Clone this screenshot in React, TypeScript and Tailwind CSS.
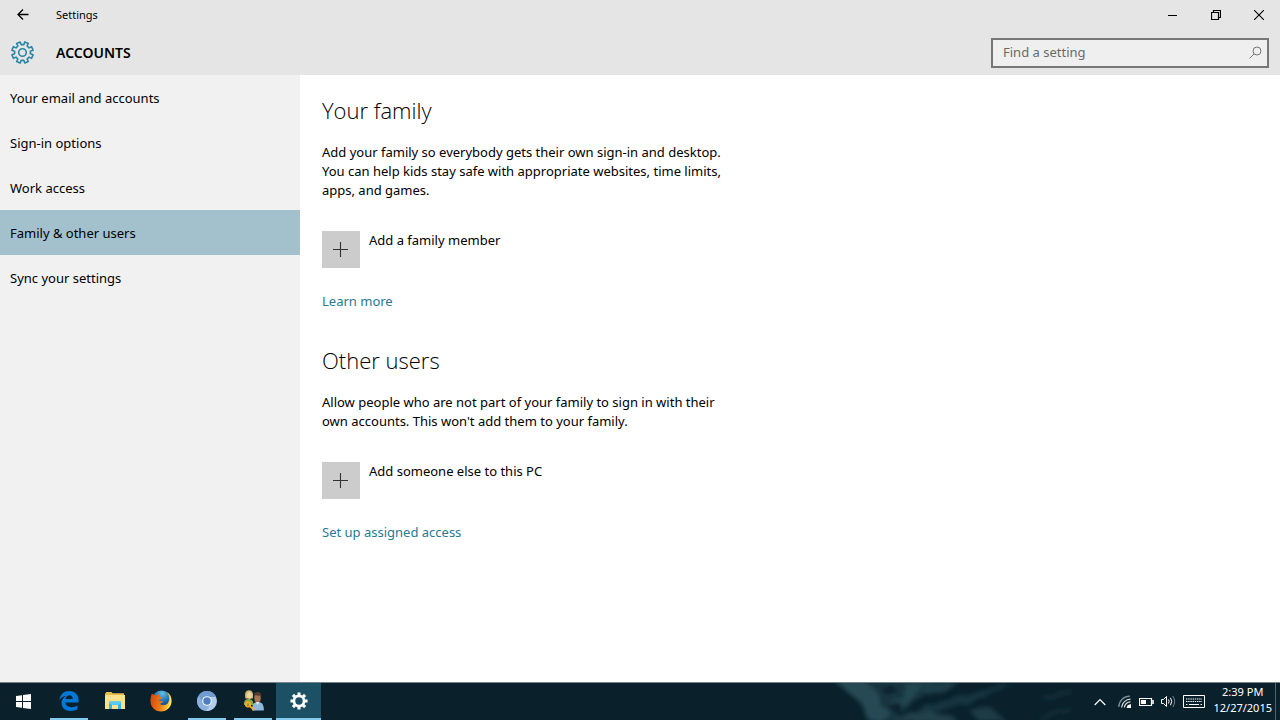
import React from 'react';

function gearPath(cx: number, cy: number, outer: number, root: number, topHalf: number, rootHalf: number): string {
  const points: string[] = [];
  for (let i = 0; i < 8; i++) {
    const mid = i * 45;
    const corners: [number, number][] = [
      [root, mid - rootHalf],
      [outer, mid - topHalf],
      [outer, mid + topHalf],
      [root, mid + rootHalf],
    ];
    for (const [r, deg] of corners) {
      const a = (deg * Math.PI) / 180;
      points.push(`${(cx + r * Math.cos(a)).toFixed(2)} ${(cy + r * Math.sin(a)).toFixed(2)}`);
    }
  }
  return `M${points.join('L')}Z`;
}

const pages = ['Your email and accounts', 'Sign-in options', 'Work access', 'Family & other users', 'Sync your settings'];

function TitleBar() {
  return (
    <div className="flex h-[30px] items-center">
      <button aria-label="Back" className="flex h-full w-[45px] items-center justify-center">
        <svg width="12" height="12" viewBox="0 0 12 12" fill="none" stroke="#000" strokeWidth="1.3">
          <path d="M11.5 5.5H1M6 0.5L1 5.5L6 10.5" />
        </svg>
      </button>
      <span className="ml-[11px] flex-1 text-[11px] leading-[16px]">Settings</span>
      <button aria-label="Minimize" className="flex h-full w-[43px] items-center justify-center">
        <svg width="10" height="10" viewBox="0 0 10 10" stroke="#000">
          <path d="M0 5.5H9" />
        </svg>
      </button>
      <button aria-label="Restore" className="flex h-full w-[43px] items-center justify-center">
        <svg width="10" height="10" viewBox="0 0 10 10" fill="none" stroke="#000">
          <path d="M0.5 2.5H7.5V9.5H0.5ZM2.5 2.5V0.5H9.5V7.5H7.5" strokeWidth="1.2" />
        </svg>
      </button>
      <button aria-label="Close" className="flex h-full w-[43px] items-center justify-center">
        <svg width="10" height="10" viewBox="0 0 10 10" stroke="#000" strokeWidth="1.1">
          <path d="M0 0L10 10M10 0L0 10" />
        </svg>
      </button>
    </div>
  );
}

function Header() {
  return (
    <div className="flex h-[45px] items-center pr-[11px] pl-[11px]">
      <svg width="23" height="23" viewBox="0 0 23 23" fill="none" stroke="#2b86a6" strokeWidth="1.6" strokeLinejoin="round">
        <path d={gearPath(11.5, 11.5, 10.8, 8, 10, 13)} transform="rotate(22.5 11.5 11.5)" />
        <circle cx="11.5" cy="11.5" r="3.8" />
      </svg>
      <h1 className="ml-[22px] flex-1 text-[14px] font-semibold">ACCOUNTS</h1>
      <label className="flex h-[30px] w-[278px] items-center border-2 border-[#777] bg-[#efefef] pr-[5px] pl-[10px]">
        <input
          aria-label="Find a setting"
          placeholder="Find a setting"
          className="min-w-0 flex-1 bg-transparent text-[13px] outline-none placeholder:text-[#6a6a6a]"
        />
        <svg width="13" height="13" viewBox="0 0 13 13" fill="none" stroke="#777" strokeWidth="1">
          <circle cx="8" cy="5" r="4" />
          <path d="M5.1 7.9L0.6 12.4" />
        </svg>
      </label>
    </div>
  );
}

function AddRow({ label }: { label: string }) {
  return (
    <button className="mt-[31px] flex items-start gap-[9px] text-left">
      <span className="flex h-[37px] w-[38px] items-center justify-center bg-[#ccc]">
        <svg width="16" height="16" viewBox="0 0 16 16" stroke="#333" strokeWidth="1.1">
          <path d="M7.5 0V15M0 7.5H15" />
        </svg>
      </span>
      <span>{label}</span>
    </button>
  );
}

function Section({ title, lines, add, link }: { title: string; lines: string[]; add: string; link: string }) {
  return (
    <section>
      <h2 className="font-['Open_Sans','Noto_Sans',sans-serif] text-[22px] leading-[30px] font-light">{title}</h2>
      <p className="mt-[18px]">
        {lines.map((line) => (
          <span key={line} className="block">
            {line}
          </span>
        ))}
      </p>
      <AddRow label={add} />
      <a href="#" className="mt-6 block w-fit text-[#267a94]">
        {link}
      </a>
    </section>
  );
}

function EdgeIcon() {
  return (
    <svg width="20" height="20" viewBox="0 0 20 20" fill="#0078d7">
      <path d="M0.4 9.2C1.2 3.2 5 0 10.3 0C16 0 19.6 4 19.6 9.2V11.6H6.4C6.6 14.8 9.3 16.2 12.4 16.2C14.6 16.2 16.6 15.6 18.4 14.5V18.6C16.4 19.5 14.3 20 11.8 20C6.3 20 2.5 16.8 2.5 12C2.5 9 4.2 6.3 7.2 4.9C4.4 5 1.8 6.5 0.4 9.2ZM6.6 8H13.7C13.7 5.6 12.6 4.3 10.4 4.3C8.4 4.3 7 5.7 6.6 8Z" />
    </svg>
  );
}

function FolderIcon() {
  return (
    <svg width="20" height="18" viewBox="0 0 20 18">
      <path d="M0 1.2H1V0H6.5L7.5 1.2H19V3H20V17H0Z" fill="#e8bb4f" />
      <path d="M1 3H20V17H0V4Z" fill="#fce08b" />
      <path d="M4 17V9.5H16V17H13V13H7V17Z" fill="#2ab7ec" />
      <path d="M4 9.5H16V11L13 13H7L4 11Z" fill="#59cbf3" />
    </svg>
  );
}

function FirefoxIcon() {
  return (
    <svg width="22" height="22" viewBox="0 0 22 22">
      <defs>
        <radialGradient id="globe" cx="0.55" cy="0.15" r="0.8">
          <stop offset="0" stopColor="#5cc3ea" />
          <stop offset="0.6" stopColor="#1b62a8" />
          <stop offset="1" stopColor="#123a78" />
        </radialGradient>
        <linearGradient id="fox" x1="0" y1="0" x2="1" y2="0.2">
          <stop offset="0" stopColor="#d2420f" />
          <stop offset="0.6" stopColor="#ef7d16" />
          <stop offset="1" stopColor="#fdd63c" />
        </linearGradient>
      </defs>
      <circle cx="11.5" cy="10" r="9.5" fill="url(#globe)" />
      <path
        d="M1.9 3.5C2.7 4.1 3.3 4.6 4 5C5 4.6 6.2 4.8 7.2 5.4C7.9 4.4 8.6 3.9 9.6 3.5C9.2 4.8 9.3 5.9 10 6.7L12.2 7.4C12 8.6 10.6 9 9.6 9.8L9 11.3C10.6 10.8 12.4 11 13.6 12C12 12 11.5 13.6 9.6 13.8C11.7 15.6 15.6 15.6 17.6 13.4C18.9 11.8 19.5 9.6 19.2 7.5C18.9 5.4 18 3.6 16.6 2.1C19.9 3.7 21.7 7 21.6 11C21.5 17.2 16.9 21.5 11 21.5C5 21.5 0.5 17 0.5 11C0.5 8 1 5.6 1.9 3.5Z"
        fill="url(#fox)"
      />
      <path d="M19.2 5C20.8 7 21.5 9.5 21.1 12.5C20.5 16 18.5 18.6 15.7 20C18.3 17.3 19.8 14.5 19.8 10.5C20 8.2 19.8 6.5 19.2 5Z" fill="#fde465" />
    </svg>
  );
}

function ChromiumIcon() {
  return (
    <svg width="20" height="20" viewBox="0 0 20 20">
      <circle cx="10" cy="10" r="10" fill="#7ba4d6" />
      <path d="M1.3 5A10 10 0 0 1 18.7 5L19 6H10A4.4 4.4 0 0 0 5.6 9.5Z" fill="#6f9bd0" />
      <path d="M1.3 5A10 10 0 0 0 9.2 20L13.5 13L10 14.2A4.3 4.3 0 0 1 6 11.8Z" fill="#8bb0dc" />
      <path d="M18.8 6A10 10 0 0 1 9.2 20L13.8 12.2A4.5 4.5 0 0 0 12.6 6Z" fill="#b1cdec" />
      <circle cx="10" cy="10" r="4.8" fill="#f4f8fc" />
      <circle cx="10" cy="10" r="3.7" fill="#4f7dbd" />
    </svg>
  );
}

function UsersIcon() {
  return (
    <svg width="21" height="21" viewBox="0 0 21 21">
      <path d="M1 15C0.7 11.5 2 9 5.5 9C9 9 10.5 11 10.5 15Z" fill="#88a554" />
      <path d="M2.4 8.5C1.2 3 3 0.3 6 0.3C9.2 0.3 10.8 3 9.8 8.5Z" fill="#cdbf72" />
      <ellipse cx="6.4" cy="5.5" rx="2.4" ry="3.3" fill="#f0d2aa" />
      <path d="M9.3 20.5C8.8 14.5 10.5 12 14.8 12C19 12 21 14.5 20.8 20.5Z" fill="#90b8db" />
      <ellipse cx="14.5" cy="7.8" rx="3.3" ry="4.8" fill="#a87450" />
      <path d="M10.8 7C10.6 3.5 12.2 2 14.6 2C17.5 2 18.7 4 18.2 8L16.6 5.7L12.2 5.3Z" fill="#563c2c" />
      <path d="M13 12.3L14.5 15L16.3 12.3Z" fill="#eef4fa" />
      <circle cx="5" cy="14.3" r="2.2" fill="none" stroke="#f2ad22" strokeWidth="1.9" />
      <path d="M6.5 15.8L11.3 20.3M9 18.6L10.8 17" stroke="#f2ad22" strokeWidth="1.8" />
    </svg>
  );
}

function WindowsIcon() {
  return (
    <svg width="15" height="15" viewBox="0 0 15 15" fill="#fff">
      <path d="M0 2.1L6 1.2V7H0ZM7 1.1L15 0V7H7ZM0 8H6V13.8L0 12.9ZM7 8H15V15L7 13.9Z" />
    </svg>
  );
}

function TaskGearIcon() {
  return (
    <svg width="18" height="18" viewBox="0 0 18 18">
      <path
        d={gearPath(9, 9, 8.7, 6.4, 10, 14) + 'M12.7 9A3.7 3.7 0 1 0 5.3 9A3.7 3.7 0 1 0 12.7 9Z'}
        fill="#fff"
        fillRule="evenodd"
      />
    </svg>
  );
}

const apps = [
  { name: 'Microsoft Edge', icon: <EdgeIcon />, open: true },
  { name: 'File Explorer', icon: <FolderIcon />, open: false },
  { name: 'Firefox', icon: <FirefoxIcon />, open: false },
  { name: 'Chromium', icon: <ChromiumIcon />, open: true },
  { name: 'User Accounts', icon: <UsersIcon />, open: true },
];

function Wallpaper() {
  return (
    <svg className="absolute inset-y-0 left-[65%] h-full w-[240px]" viewBox="0 0 240 37" preserveAspectRatio="none" fill="none" aria-hidden="true">
      <defs>
        <filter id="haze" x="-10%" y="-30%" width="120%" height="160%">
          <feTurbulence type="fractalNoise" baseFrequency="0.06" numOctaves="3" seed="4" result="noise" />
          <feDisplacementMap in="SourceGraphic" in2="noise" scale="8" />
          <feGaussianBlur stdDeviation="2" />
        </filter>
      </defs>
      <g filter="url(#haze)">
        <path d="M0 -4H120V4L92 12L64 34L60 40H36L28 20L14 8Z" fill="#18363f" />
        <path d="M2 -4H30L46 10L50 24L60 30L48 37H38L30 20L16 8Z" fill="#274a55" />
        <path d="M72 0H92L80 16L64 26L58 22L70 12Z" fill="#23464f" />
        <path d="M50 40L90 27L120 33L128 40Z" fill="#203f4a" />
        <path d="M84 27L122 15L150 5L182 2L160 9L130 23L96 30Z" fill="#17363f" />
        <path d="M136 26L158 24L176 40H148Z" fill="#1e3b45" />
        <path d="M92 0H130L108 6L90 10Z" fill="#1e414a" />
        <path d="M48 4L60 2L66 8L55 13ZM54 25L68 19L68 31Z" fill="#0c242e" />
        <path d="M212 15L240 8M206 37L228 27L240 25" stroke="#132e38" strokeWidth="4" />
      </g>
    </svg>
  );
}

function Tray() {
  return (
    <div className="relative flex h-full items-center text-white">
      <button aria-label="Show hidden icons" className="mr-3">
        <svg width="12" height="8" viewBox="0 0 12 8" fill="none" stroke="#fff" strokeWidth="1.2">
          <path d="M0.7 7L6 1.5L11.3 7" />
        </svg>
      </button>
      <button aria-label="Network" className="mr-2">
        <svg width="13" height="13" viewBox="0 0 13 13" fill="none" strokeWidth="1.2">
          <path d="M0.8 12A11 11 0 0 1 12 1.2" stroke="#81949b" />
          <path d="M3.6 12.5A9 9 0 0 1 12.5 4.2M6.3 12.5A6.2 6.2 0 0 1 12.5 6.9" stroke="#d4dbdd" />
          <path d="M8.6 13A4 4 0 0 1 13 9.2V13Z" fill="#fff" />
        </svg>
      </button>
      <button aria-label="Battery" className="mr-[7px]">
        <svg width="15" height="10" viewBox="0 0 15 10" fill="none" stroke="#fff">
          <path d="M0.5 1.5H12.5V8.5H0.5Z" strokeWidth="1.2" />
          <path d="M14 3V7" strokeWidth="1.6" />
          <path d="M2 3H7V7H2Z" fill="#fff" stroke="none" />
        </svg>
      </button>
      <button aria-label="Volume" className="mr-[7px]">
        <svg width="15" height="13" viewBox="0 0 15 13" fill="none" stroke="#fff">
          <path d="M0.5 4.5H2.5L5.5 1.5V11.5L2.5 8.5H0.5Z" />
          <path d="M7.5 4.5Q8.8 6.5 7.5 8.5M9.5 2.8Q12 6.5 9.5 10.2" />
          <path d="M11.8 1Q15.6 6.5 11.8 12" stroke="#71868e" />
        </svg>
      </button>
      <button aria-label="Touch keyboard" className="mr-2">
        <svg width="22" height="13" viewBox="0 0 22 13" fill="none" stroke="#fff">
          <path d="M0.5 0.5H21.5V12.5H0.5Z" />
          <path d="M3 4H19M3 6.5H19" strokeDasharray="1.4 0.8" strokeWidth="1.2" />
          <path d="M3 9.5H4.5M6 9.5H16M17.5 9.5H19" strokeWidth="1.2" />
        </svg>
      </button>
      <div className="mr-[3px] pb-[3px] text-center text-[11px] leading-[16px]">
        <div>2:39 PM</div>
        <div>12/27/2015</div>
      </div>
      <button aria-label="Show desktop" className="h-full w-[5px] border-l border-[#52656d]" />
    </div>
  );
}

function Taskbar() {
  return (
    <footer className="relative flex h-[38px] items-center border-t border-[#75838a] bg-[#0a212b]">
      <Wallpaper />
      <button aria-label="Start" className="flex h-full w-[46px] items-center justify-center">
        <WindowsIcon />
      </button>
      {apps.map((app) => (
        <button key={app.name} aria-label={app.name} className="flex h-full w-[46px] flex-col items-center">
          <span className="flex flex-1 items-center">{app.icon}</span>
          <span className={app.open ? 'h-[2px] w-[38px] bg-[#82cbee]' : 'h-[2px]'} />
        </button>
      ))}
      <button aria-label="Settings" className="flex h-full w-[45px] flex-col items-center bg-[#1c5064]">
        <span className="flex flex-1 items-center">
          <TaskGearIcon />
        </span>
        <span className="h-[2px] w-full bg-[#82cbee]" />
      </button>
      <div className="flex-1" />
      <Tray />
    </footer>
  );
}

export default function App() {
  return (
    <div className="flex min-h-screen flex-col bg-white font-['Noto_Sans','Open_Sans',sans-serif] text-[13px] leading-[19px] text-black">
      <header className="bg-[#e5e5e5]">
        <TitleBar />
        <Header />
      </header>
      <div className="flex flex-1">
        <nav className="w-[300px] shrink-0 bg-[#f1f1f1]">
          {pages.map((page, i) => (
            <a
              key={page}
              href="#"
              aria-current={i === 3 ? 'page' : undefined}
              className={i === 3 ? 'flex h-[45px] items-center bg-[#a2c1cd] px-[10px] pt-[2px]' : 'flex h-[45px] items-center px-[10px] pt-[2px]'}
            >
              {page}
            </a>
          ))}
        </nav>
        <main className="flex flex-col gap-[34px] px-[22px] pt-5">
          <Section
            title="Your family"
            lines={[
              'Add your family so everybody gets their own sign-in and desktop.',
              'You can help kids stay safe with appropriate websites, time limits,',
              'apps, and games.',
            ]}
            add="Add a family member"
            link="Learn more"
          />
          <Section
            title="Other users"
            lines={[
              'Allow people who are not part of your family to sign in with their',
              "own accounts. This won't add them to your family.",
            ]}
            add="Add someone else to this PC"
            link="Set up assigned access"
          />
        </main>
      </div>
      <Taskbar />
    </div>
  );
}
